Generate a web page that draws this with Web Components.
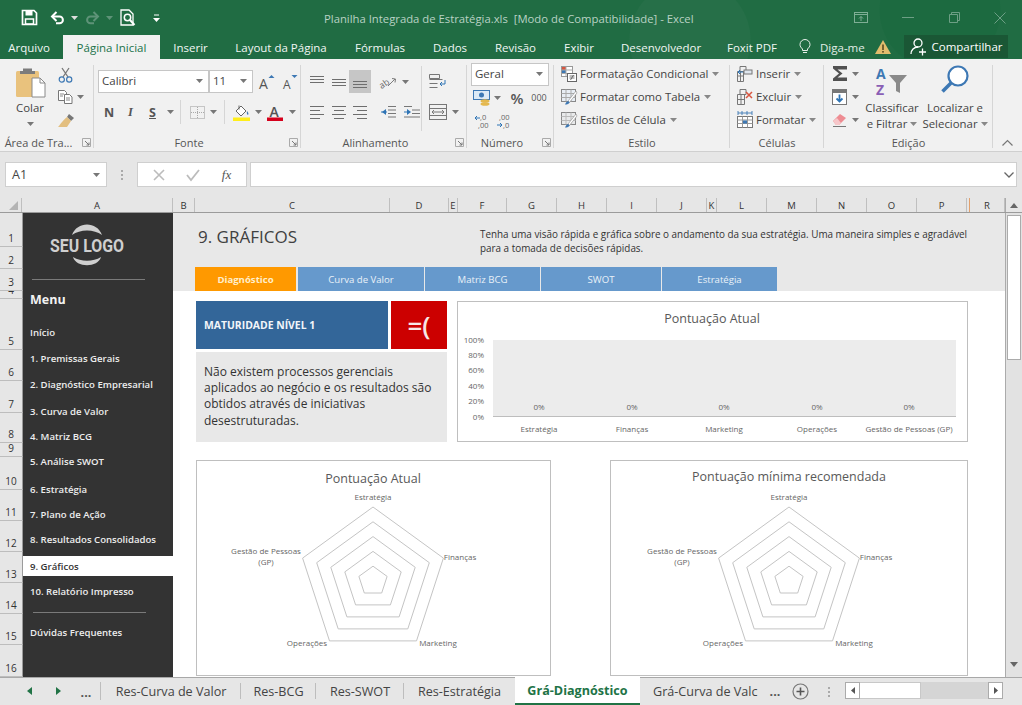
<!DOCTYPE html>
<html lang="pt"><head><meta charset="utf-8"><title>Excel</title>
<style>html,body{margin:0;padding:0;width:1022px;height:705px;overflow:hidden;background:#e6e6e6;font-family:"Open Sans","Noto Sans",sans-serif}</style>
</head><body><xl-window></xl-window>
<script>
const S=(w,h,inner,extra='')=>`<svg width="${w}" height="${h}" viewBox="0 0 ${w} ${h}" fill="none" style="overflow:visible" ${extra}>${inner}</svg>`;
const caret=(c='#777')=>S(7,4,`<path d="M0 0h7L3.5 4z" fill="${c}"/>`,'class="caret"');
const lines=(ws,xs,ys)=>S(16,14,ws.map((w,i)=>`<rect x="${xs[i]}" y="${ys[i]}" width="${w}" height="1" fill="#6e6e6e"/>`).join(''));
const I={
save:S(17,17,`<path d="M1.5 1.5h11.5l2.5 2.5v11.5H1.5z" stroke="#fff" stroke-width="1.7"/><path d="M4.5 2h7v4.5h-7z" fill="#fff"/><path d="M4.5 10h8v5h-8z" stroke="#fff" stroke-width="1.5"/>`),
undo:S(16,14,`<path d="M2.5 5.5h7a3.3 3.3 0 0 1 0 6.8H6" stroke="#fff" stroke-width="2"/><path d="M6.5 1L2 5.5 6.5 10" stroke="#fff" stroke-width="2"/>`),
redo:S(16,14,`<path d="M13.5 5.5h-7a3.3 3.3 0 0 0 0 6.8H10" stroke="#5e9378" stroke-width="2"/><path d="M9.5 1L14 5.5 9.5 10" stroke="#5e9378" stroke-width="2"/>`),
preview:S(16,18,`<path d="M1 1h8l4 4v11H1z" stroke="#fff" stroke-width="1.3"/><circle cx="7.5" cy="8.5" r="3.2" stroke="#fff" stroke-width="1.5"/><path d="M10 11l4.5 5" stroke="#fff" stroke-width="2"/>`),
custom:S(7,8,`<path d="M1 1h5" stroke="#fff"/><path d="M0 4h7L3.5 8z" fill="#fff"/>`),
wdisp:S(14,11,`<rect x=".5" y=".5" width="13" height="10" stroke="#7fae95"/><path d="M.5 2.5h13" stroke="#7fae95"/><path d="M7 9V4.5M5 6.5l2-2 2 2" stroke="#7fae95"/>`),
wmin:S(12,2,`<path d="M0 .5h12" stroke="#6d9f85"/>`),
wmax:S(11,11,`<path d="M.5 2.5h8v8h-8zM2.5 2.5v-2h8v8h-2" stroke="#6d9f85"/>`),
wclose:S(12,12,`<path d="M.5.5l11 11M11.5.5l-11 11" stroke="#6d9f85"/>`),
bulb:S(12,16,`<path d="M3.5 10C2 8.5 1 7.5 1 5.5a5 5 0 0 1 10 0c0 2-1 3-2.500 4.500v1.500h-5z" stroke="#e6efe9" stroke-width="1"/><path d="M4 13.500h4" stroke="#e6efe9"/>`),
warn:S(16,14,`<path d="M8 0l8 14H0z" fill="#e2bd6d"/><rect x="7.200" y="4.500" width="1.600" height="5.500" fill="#5a4a20"/><rect x="7.200" y="11" width="1.600" height="1.600" fill="#5a4a20"/>`),
person:S(18,17,`<circle cx="8" cy="5" r="4" stroke="#fff" stroke-width="1.300"/><path d="M1 16c0-4 3-7 7-7" stroke="#fff" stroke-width="1.300"/><path d="M9 14h7M12.500 10.500v7" stroke="#fff" stroke-width="1.300"/>`),
paste:S(31,31,`<rect x="1" y="4" width="23" height="26" rx="1.500" fill="#e9c27d"/><path d="M8 4V1.500h9V4h3v3H5V4z" fill="#7c7c7c"/><path d="M17 11h8l5 5v14H17z" fill="#fff" stroke="#8a8a8a"/><path d="M25 11v5h5" stroke="#8a8a8a"/>`),
cut:S(15,16,`<path d="M4 1l6 9M11 1l-6 9" stroke="#777" stroke-width="1.300"/><circle cx="3.800" cy="12.500" r="2.600" stroke="#3d78b4" stroke-width="1.200"/><circle cx="11.200" cy="12.500" r="2.600" stroke="#3d78b4" stroke-width="1.200"/>`),
copy:S(15,14,`<path d="M.5.5h6l2 2v8h-8z" fill="#fff" stroke="#777"/><path d="M6.500 4.500h5l2.500 2.500v6.500H6.500z" fill="#fff" stroke="#777"/><path d="M2 4h4M2 6h3M8 8h4M8 10h4" stroke="#888"/>`),
brush:S(18,15,`<path d="M12 1l5 4-3 3-4-4z" fill="#777"/><path d="M10 4l4 4-4 6-9 0C3 12 5 8 10 4z" fill="#e3bf80"/>`),
growA:S(16,16,`<text x="0" y="15" font-size="14" fill="#555" font-family="Open Sans">A</text><path d="M9.500 4l3-3 3 3z" fill="#3d78b4"/>`),
shrinkA:S(16,16,`<text x="1" y="15" font-size="12" fill="#555" font-family="Open Sans">A</text><path d="M9.500 1l3 3 3-3z" fill="#3d78b4"/>`),
border:S(15,13,`<rect x=".5" y=".5" width="14" height="12" stroke="#999" stroke-dasharray="1 1"/><path d="M7.500 1v11M1 6.500h13" stroke="#aaa" stroke-dasharray="1 1"/>`),
fill:S(18,17,`<path d="M3 7l5-5 5 5-5 5z" fill="#fff" stroke="#666"/><path d="M6 1.500v4" stroke="#666"/><path d="M14 7c1 1.500 2 2.500 1 4-1-.5-1.500-2.500-1-4z" fill="#3d78b4"/><rect x="0" y="13.500" width="17" height="3.500" fill="#ffee1a"/>`),
fcolor:S(17,17,`<text x="2.500" y="12.500" font-size="14" font-weight="600" fill="#555" font-family="Open Sans">A</text><rect x="0" y="13.500" width="16" height="3.500" fill="#d5001c"/>`),
atop:lines([14,14,14],[1,1,1],[1,4,7]),
amid:lines([14,14,14],[1,1,1],[4,7,10]),
abot:lines([14,14,14],[1,1,1],[6,9,12]),
aleft:lines([14,10,14,10],[1,1,1,1],[1,5,9,13]),
acen:lines([14,10,14,10],[1,3,1,3],[1,5,9,13]),
aright:lines([14,10,14,10],[1,5,1,5],[1,5,9,13]),
orient:S(18,16,`<text x="0" y="13" font-size="9" fill="#666" transform="rotate(-35 5 10)" font-family="Open Sans">ab</text><path d="M9 12l7-7M13 4.500l3.500.5-.5 3.500" stroke="#7c7c7c"/>`),
outdent:S(16,14,`<path d="M8 1.500h8M8 5h8M8 8.500h8M8 12h8" stroke="#777"/><path d="M6 4L2 7l4 3z" fill="#2e74b5"/><path d="M1 7h6" stroke="#2e74b5"/>`),
indent:S(16,14,`<path d="M0 1.500h8M8 5h8M8 8.500h8M0 12h16" stroke="#777"/><path d="M3 4l4 3-4 3z" fill="#2e74b5"/><path d="M0 7h5" stroke="#2e74b5"/>`),
wrap:S(18,16,`<path d="M.5.5h10v4H.5zM.5 5.500h13M.5 9.500h8M.5 13.500h8" stroke="#777"/><path d="M16 6v4h-5M13 8l-2 2 2 2" stroke="#2e74b5"/>`),
merge:S(18,16,`<rect x=".5" y=".5" width="17" height="15" stroke="#777"/><path d="M.5 4.500h17M.5 11.500h17" stroke="#777"/><path d="M3 8h12M5 6l-2 2 2 2M13 6l2 2-2 2" stroke="#777"/>`),
acct:S(18,16,`<rect x=".5" y=".5" width="16" height="9" fill="#dceaf6" stroke="#3d78b4"/><circle cx="8.500" cy="5" r="2.500" fill="#3d78b4"/><ellipse cx="12" cy="11" rx="4.500" ry="1.800" fill="#e4b84f"/><ellipse cx="12" cy="14" rx="4.500" ry="1.800" fill="#e4b84f"/>`),
dec1:S(14,16,`<text x="5" y="7" font-size="7.500" fill="#666" font-family="Open Sans">,0</text><text x="3" y="15" font-size="7.500" fill="#666" font-family="Open Sans">,00</text><path d="M0 5h5M2 3L0 5l2 2" stroke="#2e74b5"/>`),
dec2:S(15,16,`<text x="3" y="7" font-size="7.500" fill="#666" font-family="Open Sans">,00</text><text x="7" y="15" font-size="7.500" fill="#666" font-family="Open Sans">,0</text><path d="M1 12h5M4 10l2 2-2 2" stroke="#2e74b5"/>`),
cond:S(16,16,`<rect x=".5" y=".5" width="11" height="10" fill="#fff" stroke="#999"/><rect x="1" y="1" width="4" height="3" fill="#d8553f"/><rect x="1" y="4" width="4" height="3" fill="#3d78b4"/><path d="M5 .5v10M.5 4h11M.5 7.500h11" stroke="#aaa"/><rect x="6.500" y="7.500" width="9" height="8" fill="#fff" stroke="#666"/><path d="M8.500 10h5M8.500 12h5M12.500 9l-3 5" stroke="#555" stroke-width=".8"/>`),
table:S(17,16,`<rect x=".5" y=".5" width="14" height="12" fill="#e8eef5" stroke="#888"/><path d="M.5 4.500h14M.5 8.500h14M5 .5v12M10 .5v12" stroke="#aaa"/><path d="M8 14l8-10-1-2-8 10z" fill="#fff" stroke="#888" stroke-width=".6"/><path d="M4 15.500c1-3 3-4 4-3s0 3-4 3z" fill="#3d78b4"/>`),
cellst:S(17,16,`<rect x=".5" y=".5" width="14" height="12" fill="#e9eaeb" stroke="#888"/><path d="M.5 4.500h14M.5 8.500h14M5 .5v12M10 .5v12" stroke="#bbb"/><path d="M8 14l8-10-1-2-8 10z" fill="#fff" stroke="#888" stroke-width=".6"/><path d="M4 15.500c1-3 3-4 4-3s0 3-4 3z" fill="#3d78b4"/>`),
cins:S(16,16,`<path d="M.5 5.500h6v10h-6zM.5 10h6M3.500 5.500v10M3 .5h6v5H3z" stroke="#777"/><rect x="7" y="4" width="8" height="4" fill="#dfe6ee" stroke="#777"/><path d="M6 6H1M3 4L1 6l2 2" stroke="#2e74b5"/>`),
cdel:S(16,16,`<path d="M.5 5.500h7v10h-7zM.5 10.500h7M4 5.500v10M3 .5h6v5H3z" stroke="#777"/><path d="M9 3l6 6M15 3l-6 6" stroke="#d8553f" stroke-width="1.500"/>`),
cfmt:S(17,17,`<rect x=".5" y="5.500" width="15" height="11" stroke="#777" fill="#fff"/><path d="M.5 9h15M.5 12.500h15M5.500 5.500v11M10.500 5.500v11" stroke="#999"/><rect x="6" y="9.500" width="4" height="3" fill="#3d78b4"/><path d="M1 2h14M1 0v4M15 0v4M5 0v4M10 0v4" stroke="#3d78b4" stroke-width=".9"/>`),
sigma:S(16,15,`<path d="M1 0h14v3.500h-9.500l5 4-5 4H15V15H1v-2.500L7 7.500 1 2.500z" fill="#505050"/>`),
filld:S(15,16,`<rect x=".5" y=".5" width="14" height="15" fill="#fff" stroke="#777"/><rect x="1" y="1" width="13" height="3" fill="#777"/><path d="M7.500 5.500v7M4.500 9.500l3 3 3-3" stroke="#2e74b5" stroke-width="1.800"/>`),
eraser:S(16,14,`<path d="M1 8l7-7 6 4-7 7H4z" fill="#ee8c92"/><path d="M1 8l3 4h3l2-2-4-5z" fill="#f7c7ca"/><path d="M1 13.500h13" stroke="#777"/>`),
sort:S(32,30,`<text x="0" y="12" font-size="14" font-weight="700" fill="#3d78b4" font-family="Open Sans">A</text><text x="0" y="28" font-size="14" font-weight="700" fill="#8a5fb5" font-family="Open Sans">Z</text><path d="M13 8h18l-7 8v10l-4-2v-8z" fill="#8a8a8a"/>`),
find:S(28,28,`<circle cx="17" cy="11" r="9.500" fill="#fff" stroke="#3d78b4" stroke-width="2.200"/><path d="M10 18L1.500 26.500" stroke="#3d78b4" stroke-width="3.500"/>`),
launch:S(9,9,`<path d="M.5.5h8v8h-8z" stroke="#aaa"/><path d="M3 3l4 4M7 4.500V7H4.500" stroke="#777"/>`),
chev:S(11,6,`<path d="M.5 5.500l5-5 5 5" stroke="#777" stroke-width="1.200"/>`),
x:S(12,12,`<path d="M1 1l10 10M11 1L1 11" stroke="#bcbcbc" stroke-width="1.600"/>`),
v:S(14,12,`<path d="M1 6l4 5 8-10" stroke="#bcbcbc" stroke-width="1.800"/>`),
};

class XlWindow extends HTMLElement{constructor(){super();this.attachShadow({mode:'open'}).innerHTML=`
<style>:host{display:flex;flex-direction:column;width:1022px;height:705px;overflow:hidden;color:#444;font-family:"Open Sans","Noto Sans",sans-serif}</style>
<xl-header></xl-header><xl-ribbon></xl-ribbon><xl-formula></xl-formula><xl-columns></xl-columns><xl-sheet></xl-sheet><xl-tabs></xl-tabs>`}}

class XlHeader extends HTMLElement{constructor(){super();const tabs=[['Arquivo',58],['Página Inicial',97],['Inserir',61],['Layout da Página',120],['Fórmulas',78],['Dados',62],['Revisão',69],['Exibir',58],['Desenvolvedor',106],['Foxit PDF',76]];
this.attachShadow({mode:'open'}).innerHTML=`
<style>:host{display:block;height:59px;background:radial-gradient(circle at 690px 40px,#266f48 0,#266f48 60px,transparent 61px),radial-gradient(circle at 940px 10px,#1c6a40 0,#1c6a40 60px,transparent 61px),#206c43;color:#fff;font-size:11.5px;flex:none}
.top{height:35px;display:flex;align-items:center}
.qat{width:324px;flex:none;display:flex;align-items:center;padding-left:21px;box-sizing:border-box}
.q{display:flex;align-items:center;justify-content:center}
.title{flex:1;color:#b9d2c4;font-size:11.3px;white-space:pre;padding-top:1px}
.win{width:185px;flex:none;display:flex;align-items:center}
.win span{width:47px;display:flex;justify-content:center}.win span:last-child{width:44px}
.tabs{height:24px;display:flex;align-items:stretch}
.t{display:flex;align-items:center;justify-content:center;flex:none;color:#f1f6f3}
.t.on{background:#f1f1f1;color:#20734a;margin-left:5px}
.tell{display:flex;align-items:center;gap:9px;margin-left:8px;width:76px;color:#e2ece6;padding-left:1px;box-sizing:border-box;flex:none}
.warn{display:flex;align-items:center;width:30px;flex:none;box-sizing:border-box;padding-left:1px}
.share{width:104px;flex:none;margin-bottom:1px;background:#1a5735;display:flex;align-items:center;justify-content:center;gap:4px;color:#fff}
</style>
<div class="top"><div class="qat"><span class="q" style="width:17px">${I.save}</span><span class="q" style="width:24px;margin-left:8px">${I.undo}</span><span class="q" style="width:8px">${caret('#ddd')}</span><span class="q" style="width:24px;margin-left:2px">${I.redo}</span><span class="q" style="width:10px">${caret('#5e9378')}</span><span class="q" style="width:20px;margin-left:4px">${I.preview}</span><span class="q" style="width:10px;margin-left:13px">${I.custom}</span></div>
<div class="title">Planilha Integrada de Estratégia.xls  [Modo de Compatibilidade] - Excel</div>
<div class="win"><span>${I.wdisp}</span><span>${I.wmin}</span><span>${I.wmax}</span><span>${I.wclose}</span></div></div>
<div class="tabs">${tabs.map(([t,w],i)=>`<div class="t${i==1?' on':''}" style="width:${w}px">${t}</div>`).join('')}
<div class="tell">${I.bulb}<span>Diga-me</span></div><div class="warn">${I.warn}</div><div class="share">${I.person}<span>Compartilhar</span></div></div>`}}

class RbGroup extends HTMLElement{constructor(){super();this.attachShadow({mode:'open'}).innerHTML=`
<style>:host{display:flex;flex-direction:column;flex:none;box-sizing:border-box;height:89px;position:relative}
.b{height:72px;display:flex;flex:none}
.l{flex:1;display:flex;align-items:center;font-size:11px;color:#555;padding:0 4px 0 4px;min-width:0}
.l span{flex:1;text-align:center;white-space:nowrap}
:host([launch]) .l span{padding-right:9px}
.s{position:absolute;right:0;top:3px;bottom:3px;width:1px;background:#d6d6d6}</style>
<div class="b"><slot></slot></div><div class="l"><span id="t"></span><slot name="launch"></slot></div><div class="s"></div>`}
connectedCallback(){this.style.width=this.getAttribute('w')+'px';this.shadowRoot.getElementById('t').textContent=this.getAttribute('label')}}

class XlRibbon extends HTMLElement{constructor(){super();const L=`<i slot="launch" class="lc">${I.launch}</i>`;
const st=(ic,t,c=true,w)=>`<div class="r" ${w?`style="width:${w}px"`:''}><i class="ic">${ic}</i><span>${t}</span>${c?`<i class="tc">${caret('#888')}</i>`:''}</div>`;
this.attachShadow({mode:'open'}).innerHTML=`
<style>:host{display:flex;height:93px;box-sizing:border-box;padding-top:3px;background:#f1f1f1;border-bottom:1px solid #cfcfcf;font-size:11.4px;color:#444;flex:none}
i{font-style:normal;display:inline-flex;align-items:center;justify-content:center;flex:none}
.col{display:flex;flex-direction:column}
.row{display:flex;align-items:center}
.c{display:flex;align-items:center;justify-content:center;flex:none}
.combo{height:23px;background:#fff;border:1px solid #c6c6c6;box-sizing:border-box;display:flex;align-items:center;justify-content:space-between;padding:0 5px 2px 3px;font-size:11.5px;flex:none}
.sep{width:1px;background:#d6d6d6;flex:none;align-self:stretch}
.lc{margin-right:-1px}
.r{height:23px;display:flex;align-items:center;white-space:nowrap}
.r .ic{width:18px;margin-right:2px}.r .tc{margin-left:4px}
.cc{text-align:center;line-height:16px;font-size:11.4px}
.big{display:flex;flex-direction:column;align-items:center;flex:none}
.hl{background:#c6c6c6}
</style>
<rb-group w="94" label="Área de Tra..." launch>
 <div class="big" style="width:52px;margin-left:4px;padding-top:5px;box-sizing:border-box">${I.paste}<div style="margin-top:2px">Colar</div><div style="margin-top:4px;line-height:6px">${caret()}</div></div>
 <div class="col" style="width:36px;padding-top:3px"><div class="c" style="width:18px;height:19px;margin-left:0">${I.cut}</div><div class="row" style="height:25px"><div class="c" style="width:18px">${I.copy}</div><span class="c" style="margin-left:3px">${caret()}</span></div><div class="c" style="width:20px;height:22px">${I.brush}</div></div>
 ${L}</rb-group>
<rb-group w="207" label="Fonte" launch>
 <div class="col" style="padding:8px 0 0 4px"><div class="row" style="height:23px"><div class="combo" style="width:111px"><span>Calibri</span>${caret()}</div><div class="combo" style="width:44px"><span>11</span>${caret()}</div><div class="c" style="width:24px;margin-left:2px">${I.growA}</div><div class="c" style="width:22px">${I.shrinkA}</div></div>
 <div class="row" style="height:24px;margin-top:7px"><div class="c" style="width:22px;font-weight:700;font-size:12.5px;color:#555">N</div><div class="c" style="width:21px;font:italic 700 12.5px 'Liberation Serif',serif;color:#555">I</div><div class="c" style="width:23px;font-weight:700;font-size:12.5px;color:#555;text-decoration:underline">S</div><div class="c" style="width:12px">${caret()}</div><div class="sep" style="margin:0 6px 0 4px"></div><div class="c" style="width:20px">${I.border}</div><div class="c" style="width:12px">${caret()}</div><div class="sep" style="margin:0 7px 0 5px"></div><div class="c" style="width:20px">${I.fill}</div><div class="c" style="width:12px">${caret()}</div><div class="c" style="width:22px">${I.fcolor}</div><div class="c" style="width:12px">${caret()}</div></div></div>
 ${L}</rb-group>
<rb-group w="166" label="Alinhamento" launch>
 <div class="col" style="padding:8px 0 0 5px;width:115px;box-sizing:content-box"><div class="row" style="height:23px"><div class="c" style="width:22px">${I.atop}</div><div class="c" style="width:21px">${I.amid}</div><div class="c hl" style="width:22px;height:23px">${I.abot}</div><div class="c" style="width:26px;margin-left:4px">${I.orient}</div><div class="c" style="width:8px">${caret()}</div></div>
 <div class="row" style="height:24px;margin-top:7px"><div class="c" style="width:22px">${I.aleft}</div><div class="c" style="width:21px">${I.acen}</div><div class="c" style="width:22px">${I.aright}</div><div class="c" style="width:26px;margin-left:4px">${I.outdent}</div><div class="c" style="width:21px">${I.indent}</div></div></div>
 <div class="sep" style="margin:4px 0 3px 0"></div>
 <div class="col" style="padding:8px 0 0 7px"><div class="row" style="height:23px"><div class="c" style="width:18px">${I.wrap}</div></div><div class="row" style="height:24px;margin-top:7px"><div class="c" style="width:18px">${I.merge}</div><div class="c" style="margin-left:5px">${caret()}</div></div></div>
 ${L}</rb-group>
<rb-group w="87" label="Número" launch>
 <div class="col" style="padding:1px 0 0 4px"><div class="combo" style="width:78px;height:23px"><span>Geral</span>${caret()}</div>
 <div class="row" style="height:23px"><div class="c" style="width:18px;margin-left:2px">${I.acct}</div><div class="c" style="width:12px">${caret()}</div><div class="c" style="width:24px;margin-left:2px;font-size:15px;color:#555;font-weight:600">%</div><div class="c" style="width:20px;font-size:9px;color:#555">000</div></div>
 <div class="row" style="height:23px"><div class="c" style="width:20px;margin-left:1px">${I.dec1}</div><div class="c" style="width:22px">${I.dec2}</div></div></div>
 ${L}</rb-group>
<rb-group w="176" label="Estilo"><div class="col" style="padding:0 0 0 6px">${st(I.cond,'Formatação Condicional')}${st(I.table,'Formatar como Tabela')}${st(I.cellst,'Estilos de Célula')}</div></rb-group>
<rb-group w="94" label="Células"><div class="col" style="padding:0 0 0 6px">${st(I.cins,'Inserir')}${st(I.cdel,'Excluir')}${st(I.cfmt,'Formatar')}</div></rb-group>
<rb-group w="169" label="Edição">
 <div class="col" style="width:29px;padding:0 0 0 7px;box-sizing:content-box"><div class="row" style="height:23px"><div class="c" style="width:17px">${I.sigma}</div><div class="c" style="margin-left:4px">${caret()}</div></div><div class="row" style="height:23px"><div class="c" style="width:17px">${I.filld}</div><div class="c" style="margin-left:4px">${caret()}</div></div><div class="row" style="height:23px"><div class="c" style="width:17px">${I.eraser}</div><div class="c" style="margin-left:4px">${caret()}</div></div></div>
 <div class="big cc" style="width:64px;padding-top:5px;margin-left:0"><div style="height:33px">${I.sort}</div><div>Classificar</div><div class="row" style="gap:3px">e Filtrar${caret('#888')}</div></div>
 <div class="big cc" style="width:62px;padding-top:3px"><div style="height:35px">${I.find}</div><div>Localizar e</div><div class="row" style="gap:3px">Selecionar${caret('#888')}</div></div>
</rb-group>
<div class="col" style="flex:1;align-items:center;justify-content:flex-end;padding-bottom:5px">${I.chev}</div>`}}

class XlFormula extends HTMLElement{constructor(){super();this.attachShadow({mode:'open'}).innerHTML=`
<style>:host{display:flex;height:46px;flex:none;box-sizing:border-box;padding:10px 5px 11px 5px;background:#e6e6e6;align-items:stretch}
.b{background:#fff;border:1px solid #cfcfcf;box-sizing:border-box;display:flex;align-items:center}
.name{width:102px;padding:0 6px;justify-content:space-between;font-size:12.5px;color:#444}
.dots{width:30px;display:flex;flex-direction:column;align-items:center;justify-content:center;gap:2px}.dots i{width:2px;height:2px;background:#aaa}
.fn{width:110px;justify-content:space-around;padding:0 4px;margin-right:3px}
.fx{font:italic 13px "Liberation Serif",serif;color:#555}
.in{flex:1;justify-content:flex-end;padding-right:2px}</style>
<div class="b name"><span>A1</span>${caret('#777')}</div><div class="dots"><i></i><i></i><i></i></div>
<div class="b fn">${I.x}${I.v}<span class="fx">fx</span></div>
<div class="b in">${S(10,6,'<path d="M.5.5l4.500 4.500 4.500-4.500" stroke="#666" stroke-width="1.300"/>')}</div>`}}

class XlColumns extends HTMLElement{constructor(){super();const cols=[['A',151],['B',22],['C',195],['D',59],['E',9],['F',49],['G',50],['H',50],['I',50],['J',50],['K',10],['L',50],['M',50],['N',50],['O',50],['P',50],['',3],['R',35]];
this.attachShadow({mode:'open'}).innerHTML=`
<style>:host{display:grid;grid-template-columns:22px ${cols.map(c=>c[1]+'px').join(' ')} 17px;height:15px;flex:none;background:#e6e6e6;font-size:9.5px;color:#333;border-bottom:1px solid #9b9b9b;box-sizing:border-box}
.h{display:flex;align-items:center;justify-content:center;border-right:1px solid #bfbfbf;box-sizing:border-box;overflow:hidden}
.corner{display:flex;align-items:flex-end;justify-content:flex-end;padding:0 3px 2px 0;border-right:1px solid #bfbfbf;box-sizing:border-box}
.q{border-right:1px solid #e2a06c}
.up{display:flex;align-items:center;justify-content:center;background:#e6e6e6;border-left:1px solid #ababab}</style>
<div class="corner">${S(9,9,'<path d="M9 0v9H0z" fill="#b4b4b4"/>')}</div>${cols.map(c=>`<div class="h${c[0]?'':' q'}">${c[0]}</div>`).join('')}<div class="up">${S(8,5,'<path d="M4 0l4 5H0z" fill="#666"/>')}</div>`}}

class XlSheet extends HTMLElement{constructor(){super();const b=[213,247,269,291,299,350,381,413,443,457,490,521,552,583,614,645,677];
const rows=b.slice(1).map((e,i)=>`<div class="rh" style="height:${e-b[i]}px">${i+1}</div>`).join('');
this.attachShadow({mode:'open'}).innerHTML=`
<style>:host{display:flex;height:464px;flex:none;overflow:hidden;background:#fff}
.rows{width:23px;flex:none;background:#e6e6e6;font-size:10px;color:#333}
.rh{box-sizing:border-box;border-bottom:1px solid #bdbdbd;border-right:1px solid #9b9b9b;display:flex;align-items:flex-end;justify-content:center;overflow:hidden;line-height:13px;padding-bottom:1px}
.vs{width:17px;flex:none;background:#e2e2e2;border-left:1px solid #ababab;box-sizing:border-box;display:flex;flex-direction:column;align-items:center;padding-top:2px}
.th{width:14px;height:145px;background:#fff;border:1px solid #ababab;box-sizing:border-box}
.dn{margin-top:auto;margin-bottom:5px}</style>
<div class="rows">${rows}</div><xl-sidebar></xl-sidebar><xl-main></xl-main>
<div class="vs"><div class="th"></div><div class="dn">${S(8,5,'<path d="M0 0h8L4 5z" fill="#666"/>')}</div></div>`}}

class SideItem extends HTMLElement{constructor(){super();this.attachShadow({mode:'open'}).innerHTML=`
<style>:host{display:flex;align-items:center;height:20px;padding-left:7px;flex:none;font-size:9.6px;font-weight:600;color:#ededed;white-space:nowrap}
:host([on]){background:#fff;color:#333}</style><slot></slot>`}}

class XlSidebar extends HTMLElement{constructor(){super();const it=[['Início',0],['1. Premissas Gerais',6],['2. Diagnóstico Empresarial',6],['3. Curva de Valor',7],['4. Matriz BCG',5],['5. Análise SWOT',5],['6. Estratégia',8],['7. Plano de Ação',5],['8. Resultados Consolidados',5],['9. Gráficos',7],['10. Relatório Impresso',5]];
this.attachShadow({mode:'open'}).innerHTML=`
<style>:host{display:flex;flex-direction:column;width:150px;flex:none;background:#333;box-sizing:border-box}
.logo{height:66px;flex:none;padding:11px 0 0 27px;box-sizing:border-box}
.hr{height:1px;background:#7a7a7a;margin-left:9px;width:113px;flex:none}
.menu{font-size:12.5px;font-weight:700;color:#f2f2f2;padding-left:7px;margin-top:11px;height:18px;line-height:18px;flex:none}
</style>
<div class="logo">${S(78,44,`<path d="M22 11C27-3 47-3 52 11C44 5 30 5 22 11z" fill="#cfcfcf"/><text x="0" y="28" font-family="Roboto,'Liberation Sans',sans-serif" font-weight="700" font-size="17.500" fill="#cfcfcf" textLength="74" lengthAdjust="spacingAndGlyphs">SEU LOGO</text><path d="M23 33C31 38 43 38 51 33C48 44 26 44 23 33z" fill="#cfcfcf"/>`)}</div>
<div class="hr"></div><div class="menu">Menu</div>
<div style="height:13px;flex:none"></div>
${it.map(([t,m],i)=>`<side-item ${i==9?'on':''} style="margin-top:${m}px">${t}</side-item>`).join('')}
<div class="hr" style="margin-top:11px;margin-left:10px"></div>
<side-item style="margin-top:9px">Dúvidas Frequentes</side-item>`}}

class XlMain extends HTMLElement{constructor(){super();const tb=[['Diagnóstico',101,1],['Curva de Valor',126],['Matriz BCG',115],['SWOT',120],['Estratégia',115]];
this.attachShadow({mode:'open'}).innerHTML=`
<style>:host{display:block;flex:1;min-width:0;overflow:hidden;background:#fff}
.band{height:78px;background:#e8e8e8;display:flex;flex-direction:column;box-sizing:border-box}
.head{height:54px;display:flex;flex:none}
h1{margin:0;width:307px;box-sizing:border-box;padding:12px 0 0 25px;font:400 17px/24px "Open Sans",sans-serif;color:#404040;flex:none}
p.d{margin:0;padding-top:14px;font-size:9.9px;line-height:14px;color:#333;width:500px;flex:none;font-weight:500}
.tabs{display:flex;gap:1px;padding-left:22px;height:24px}
.tb{background:#6699cc;color:#e9f1f8;font-size:9.6px;font-weight:500;display:flex;align-items:center;justify-content:center;box-sizing:border-box;flex:none}
.tb.on{background:#ff9900;color:#ffeeca;font-weight:700;margin-right:1px}
.row{display:flex;padding-left:23px}
.left{width:251px;flex:none;display:flex;flex-direction:column;gap:3px;margin-right:10px}
.top{display:flex;gap:3px;height:48px}
.blue{width:192px;background:#336699;color:#f1f5f9;font-size:10.4px;font-weight:700;display:flex;align-items:center;padding-left:8px;box-sizing:border-box}
.red{flex:1;background:#cc0000;color:#f7e6e6;font-size:26px;font-weight:600;display:flex;align-items:center;justify-content:center;line-height:1}
.txt{height:90px;background:#e8e8e8;padding:12px 8px 0 8px;box-sizing:border-box;font-size:12px;line-height:16.200px;color:#333}
</style>
<div class="band"><div class="head"><h1>9. GRÁFICOS</h1><p class="d">Tenha uma visão rápida e gráfica sobre o andamento da sua estratégia. Uma maneira simples e agradável para a tomada de decisões rápidas.</p></div>
<div class="tabs">${tb.map(t=>`<div class="tb${t[2]?' on':''}" style="width:${t[1]}px">${t[0]}</div>`).join('')}</div></div>
<div class="row" style="margin-top:10px"><div class="left"><div class="top"><div class="blue">MATURIDADE NÍVEL 1</div><div class="red">=(</div></div><div class="txt">Não existem processos gerenciais aplicados ao negócio e os resultados são obtidos através de iniciativas desestruturadas.</div></div><xl-bars></xl-bars></div>
<div class="row" style="margin-top:18px"><xl-radar w="355" h="216" cx="176" title="Pontuação Atual" ty="22" style="margin-right:59px"></xl-radar><xl-radar w="358" h="216" cx="178" title="Pontuação mínima recomendada" ty="20"></xl-radar></div>`}}

class XlBars extends HTMLElement{constructor(){super();const ox=458,oy=302;const xs=[539,632,724,817,909],n=['Estratégia','Finanças','Marketing','Operações','Gestão de Pessoas (GP)'];const ys=[340,355,370,386,401,417],yl=['100%','80%','60%','40%','20%','0%'];
this.attachShadow({mode:'open'}).innerHTML=`
<style>:host{display:block;width:511px;height:141px;flex:none;border:1px solid #bfbfbf;box-sizing:border-box;background:#fff}svg{display:block}text{font-family:"Open Sans",sans-serif;font-size:8px;fill:#666}.t{font-size:12.500px;fill:#595959}</style>
<svg width="509" height="139" viewBox="${ox} ${oy} 509 139">
<text class="t" x="712" y="323" text-anchor="middle">Pontuação Atual</text>
<rect x="493" y="340" width="463" height="76" fill="#ececec"/><path d="M493 416.500h463" stroke="#bdbdbd"/>
${ys.map((y,i)=>`<text x="484" y="${y+3}" text-anchor="end">${yl[i]}</text>`).join('')}
${xs.map((x,i)=>`<text x="${x}" y="410" text-anchor="middle">0%</text><text x="${x}" y="432" text-anchor="middle">${n[i]}</text>`).join('')}
</svg>`}}

class XlRadar extends HTMLElement{connectedCallback(){if(this.shadowRoot)return;const w=+this.getAttribute('w'),h=+this.getAttribute('h'),cx=+this.getAttribute('cx'),t=this.getAttribute('title'),ty=+this.getAttribute('ty');this.removeAttribute('title');const cy=120,R=74;
const pts=r=>[0,1,2,3,4].map(i=>{const a=-Math.PI/2+i*2*Math.PI/5;return (cx+r*Math.cos(a)).toFixed(1)+','+(cy+r*Math.sin(a)).toFixed(1)}).join(' ');
this.attachShadow({mode:'open'}).innerHTML=`
<style>:host{display:block;width:${w}px;height:${h}px;flex:none;border:1px solid #bfbfbf;box-sizing:border-box;background:#fff}svg{display:block}text{font-family:"Open Sans",sans-serif;font-size:8px;fill:#666;text-anchor:middle}.t{font-size:12.500px;fill:#595959}</style>
<svg width="${w-2}" height="${h-2}" viewBox="0 0 ${w-2} ${h-2}">
<text class="t" x="${cx}" y="${ty}">${t}</text>
${[1,.8,.6,.4,.2].map(f=>`<polygon points="${pts(R*f)}" stroke="#c4c4c4" fill="none"/>`).join('')}
<text x="${cx}" y="39">Estratégia</text><text x="${cx+87}" y="99">Finanças</text><text x="${cx+65}" y="185">Marketing</text><text x="${cx-66}" y="185">Operações</text>
<text x="${cx-107}" y="93">Gestão de Pessoas</text><text x="${cx-107}" y="104">(GP)</text>
</svg>`}}

class XlTabs extends HTMLElement{constructor(){super();this.attachShadow({mode:'open'}).innerHTML=`
<style>:host{display:flex;height:28px;flex:none;background:#e6e6e6;font-size:12.6px;color:#444;border-top:1px solid #a8a8a8;box-sizing:border-box;align-items:stretch}
.nav{width:101px;flex:none;display:flex;align-items:center;padding-left:25px;box-sizing:border-box;border-right:1px solid #bdbdbd;margin:4px 0 5px}
.nav span{display:flex;justify-content:center;flex:none}
.t{display:flex;align-items:center;justify-content:center;flex:none;white-space:nowrap;position:relative;box-sizing:border-box}
.t.s::after{content:"";position:absolute;right:0;top:5px;bottom:6px;width:1px;background:#bdbdbd}
.on{background:#fff;color:#217346;font-weight:700;border-bottom:2px solid #217346;margin-top:-1px}
.clip{overflow:hidden;justify-content:flex-start}
.dots{font-weight:700;color:#555}
.h{display:flex;align-items:center;flex:none}
.bt{width:15px;height:17px;background:#fff;border:1px solid #ababab;box-sizing:border-box;display:flex;align-items:center;justify-content:center;flex:none}
.track{width:67px;height:17px;background:#d5d5d5;flex:none}.thumb{width:61px;height:17px;background:#fff;border:1px solid #c8c8c8;border-left:0;box-sizing:border-box;flex:none}</style>
<div class="nav"><span style="width:8px">${S(5,8,'<path d="M5 0v8L0 4z" fill="#217346"/>')}</span><span style="width:8px;margin-left:21px">${S(5,8,'<path d="M0 0v8l5-4z" fill="#217346"/>')}</span><span class="dots" style="margin-left:17px;width:14px;line-height:1;padding-top:4px">...</span></div>
<div class="t s" style="width:140px">Res-Curva de Valor</div><div class="t s" style="width:75px">Res-BCG</div><div class="t s" style="width:88px">Res-SWOT</div><div class="t" style="width:111px">Res-Estratégia</div>
<div class="t on" style="width:125px">Grá-Diagnóstico</div>
<div class="t clip" style="width:120px;padding-left:13px">Grá-Curva de Valc</div>
<div class="t dots" style="width:30px">...</div>
<div class="h" style="width:20px;justify-content:center">${S(17,17,'<circle cx="8.500" cy="8.500" r="7.500" stroke="#777" stroke-width="1.200"/><path d="M8.500 4.500v8M4.500 8.500h8" stroke="#555" stroke-width="1.600"/>')}</div>
<div class="h" style="width:10px;flex-direction:column;justify-content:center;gap:2px;margin-left:14px"><i style="width:2px;height:2px;background:#aaa"></i><i style="width:2px;height:2px;background:#aaa"></i><i style="width:2px;height:2px;background:#aaa"></i></div>
<div class="h" style="margin-left:11px;margin-bottom:2px"><div class="bt">${S(4,7,'<path d="M4 0v7L0 3.500z" fill="#555"/>')}</div><div class="thumb"></div><div class="track"></div><div class="bt">${S(4,7,'<path d="M0 0v7l4-3.500z" fill="#555"/>')}</div></div>`}}

[['xl-window',XlWindow],['xl-header',XlHeader],['rb-group',RbGroup],['xl-ribbon',XlRibbon],['xl-formula',XlFormula],['xl-columns',XlColumns],['xl-sheet',XlSheet],['side-item',SideItem],['xl-sidebar',XlSidebar],['xl-main',XlMain],['xl-bars',XlBars],['xl-radar',XlRadar],['xl-tabs',XlTabs]].forEach(([n,c])=>customElements.define(n,c));
</script></body></html>
